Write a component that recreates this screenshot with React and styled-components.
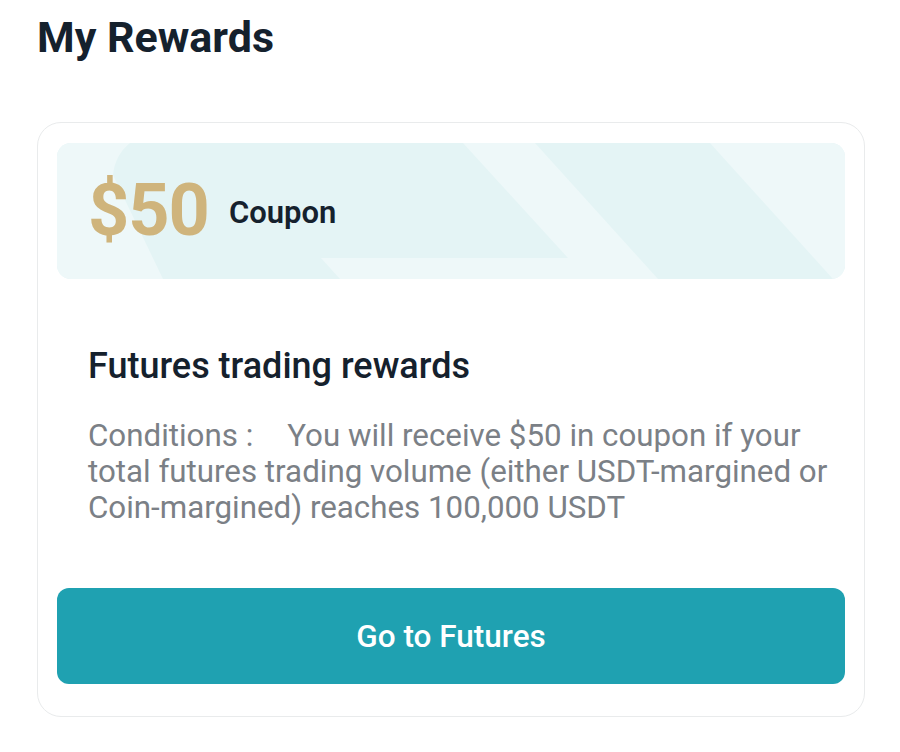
import React from 'react'
import styled, { createGlobalStyle } from 'styled-components'

const GlobalStyle = createGlobalStyle`
    body {
        margin: 0;
        background: #ffffff;
        font-family: Roboto, "Noto Sans", "Liberation Sans", sans-serif;
    }
`

const titleColor = '#15212d'
const mutedColor = '#7b8086'
const goldColor = '#cfb47c'
const tealColor = '#1fa1b1'

const Page = styled.div`
    padding: 11px 35px 30px 37px;
`

const PageTitle = styled.h1`
    margin: 0;
    font-size: 43px;
    line-height: 52px;
    font-weight: 700;
    color: ${titleColor};
`

const Card = styled.div`
    margin-top: 59px;
    width: 828px;
    box-sizing: border-box;
    border: 1.5px solid #e9ebec;
    border-radius: 24px;
    padding: 20px 19px 32px 19px;
    display: flex;
    flex-direction: column;
`

const Banner = styled.div`
    position: relative;
    height: 136px;
    border-radius: 14px;
    overflow: hidden;
    background: #e4f4f5;
    display: flex;
    align-items: center;
    padding-left: 31px;
    gap: 20px;
`

const BannerPattern = styled.svg`
    position: absolute;
    inset: 0;
    width: 100%;
    height: 100%;
`

const Amount = styled.span`
    position: relative;
    font-size: 72px;
    font-weight: 700;
    color: ${goldColor};
    line-height: 1;
    letter-spacing: -1px;
`

const AmountUnit = styled.span`
    position: relative;
    font-size: 31px;
    font-weight: 600;
    color: ${titleColor};
    margin-top: 2px;
`

const Details = styled.div`
    padding: 67px 8px 0 31px;
`

const RewardName = styled.h2`
    margin: 0;
    font-size: 36px;
    line-height: 40px;
    font-weight: 500;
    color: ${titleColor};
`

const Conditions = styled.p`
    margin: 32px 0 0 0;
    font-size: 31.3px;
    line-height: 36px;
    color: ${mutedColor};
`

const ConditionLabel = styled.span`
    margin-right: 34px;
`

const ActionButton = styled.button`
    margin-top: 62px;
    height: 96px;
    border: none;
    border-radius: 12px;
    background: ${tealColor};
    color: #ffffff;
    font-family: inherit;
    font-size: 31.5px;
    font-weight: 500;
    cursor: pointer;
`

function Pattern() {
    return (
        <BannerPattern viewBox="0 0 788 136" preserveAspectRatio="none">
            <path d="M0 0 H73 Q58 12 56 32 L106 136 H0 Z" fill="#eef8f9" />
            <path d="M406 0 H478 L601 136 H283 L264 115 H511 Z" fill="#eef8f9" />
            <path d="M653 0 H788 V136 H776 Z" fill="#eef8f9" />
        </BannerPattern>
    )
}

export default function App() {
    return (
        <Page>
            <GlobalStyle />
            <PageTitle>My Rewards</PageTitle>
            <Card>
                <Banner>
                    <Pattern />
                    <Amount>$50</Amount>
                    <AmountUnit>Coupon</AmountUnit>
                </Banner>
                <Details>
                    <RewardName>Futures trading rewards</RewardName>
                    <Conditions>
                        <ConditionLabel>Conditions :</ConditionLabel>
                        You will receive $50 in coupon if your total futures trading volume (either USDT-margined or Coin-margined) reaches 100,000 USDT
                    </Conditions>
                </Details>
                <ActionButton>Go to Futures</ActionButton>
            </Card>
        </Page>
    )
}
